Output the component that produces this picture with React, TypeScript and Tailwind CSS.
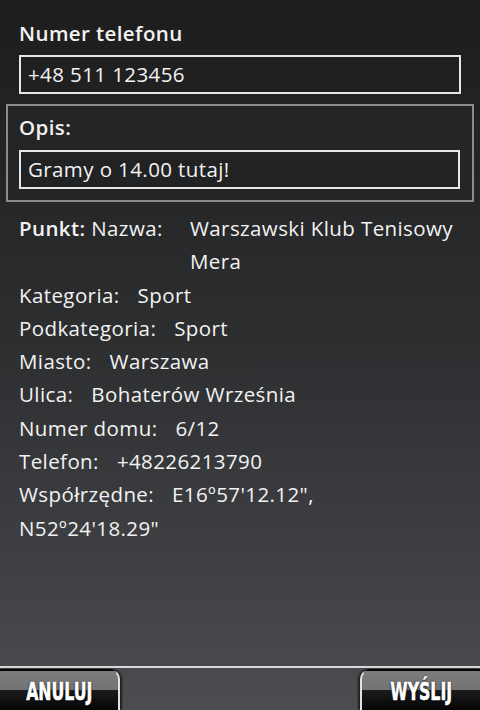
import React from "react";

const rows: { label: string; value: string }[] = [
  { label: "Kategoria:", value: "Sport" },
  { label: "Podkategoria:", value: "Sport" },
  { label: "Miasto:", value: "Warszawa" },
  { label: "Ulica:", value: "Bohaterów Września" },
  { label: "Numer domu:", value: "6/12" },
  { label: "Telefon:", value: "+48226213790" },
];

export default function App() {
  return (
    <div
      className="w-[480px] h-[710px] flex flex-col overflow-hidden text-[#f2f2f2] tracking-[0.4px] bg-gradient-to-b from-[#1d1d1d] via-[#2e2f31] to-[#4b4d51]"
      style={{ fontFamily: "'Open Sans', 'Noto Sans', sans-serif" }}
    >
      <div className="mt-[20px] px-[19px] h-[26px] leading-[26px] text-[20.5px] font-semibold">
        Numer telefonu
      </div>
      <div className="mx-[19px] mt-[9px] h-[39px] border-2 border-[#e6e6e6] bg-[#202020] px-[7px] flex items-center text-[20.5px]">
        +48 511 123456
      </div>
      <div className="mx-[6px] mt-[10px] border-2 border-[#8c8c8c] bg-[#242527] pt-[8px] pb-[11px] pl-[11px] pr-[12px]">
        <div className="h-[26px] leading-[26px] text-[20.5px] font-semibold">Opis:</div>
        <div className="mt-[10px] h-[39px] border-2 border-[#e6e6e6] bg-[#212223] px-[7px] flex items-center text-[20.5px]">
          Gramy o 14.00 tutaj!
        </div>
      </div>

      <div className="mt-[10px] px-[19px] text-[20.5px] leading-[33.3px]">
        <div className="flex">
          <div className="w-[171px] shrink-0 whitespace-nowrap">
            <span className="font-semibold">Punkt:</span> Nazwa:
          </div>
          <div className="w-[270px]">Warszawski Klub Tenisowy Mera</div>
        </div>
        {rows.map((r) => (
          <div key={r.label}>
            <span className="mr-[18px]">{r.label}</span>
            <span>{r.value}</span>
          </div>
        ))}
        <div className="w-[340px]">
          <span className="mr-[18px]">Współrzędne:</span>
          <span>E16º57'12.12",</span> <span>N52º24'18.29"</span>
        </div>
      </div>

      <div className="mt-auto">
        <div className="h-[2px] bg-[#d8d8d8] mb-[1px]" />
        <div className="flex justify-between h-[41px]">
          <Btn label="ANULUJ" side="left" />
          <Btn label="WYŚLIJ" side="right" />
        </div>
      </div>
    </div>
  );
}

function Btn({ label, side }: { label: string; side: "left" | "right" }) {
  const shape =
    side === "left"
      ? "rounded-tr-[10px] border-r-2 border-t-2 border-t-transparent border-r-[#e0e0e0] shadow-[2px_0_2px_rgba(0,0,0,0.6)]"
      : "rounded-tl-[10px] border-l-2 border-t-2 border-t-transparent border-l-[#e0e0e0] shadow-[-2px_0_2px_rgba(0,0,0,0.6)]";
  return (
    <div
      className={`w-[120px] h-[41px] flex items-center justify-center bg-[linear-gradient(to_bottom,#7b7b7b_0%,#747474_48%,#1c1c1c_50%,#050505_100%)] ${shape}`}
    >
      <span
        className="text-white text-[25px] font-bold tracking-normal scale-x-[0.7] [-webkit-text-stroke:0.6px_white] [text-shadow:0_0_2px_#000,0_1px_2px_#000] mt-[3px]"
        style={{ fontFamily: "'DejaVu Sans Condensed', 'DejaVu Sans', sans-serif" }}
      >
        {label}
      </span>
    </div>
  );
}
